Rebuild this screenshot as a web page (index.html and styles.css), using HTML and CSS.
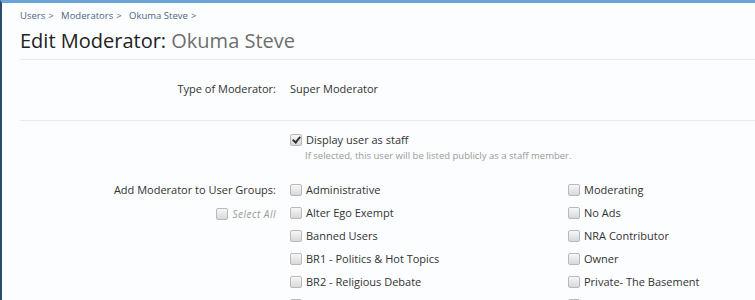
FILE: index.html
```html
<!DOCTYPE html>
<html lang="en">
  <head>
    <meta charset="UTF-8" />
    <meta name="viewport" content="width=device-width, initial-scale=1.0" />
    <title>Edit Moderator: Okuma Steve</title>
    <link rel="stylesheet" href="styles.css">
  </head>
  <body>
    <div class="container">
      <div class="breadcrumb">
        <a href="#">Users</a><span class="arrow">&gt;</span>
        <a href="#">Moderators</a><span class="arrow">&gt;</span>
        <a href="#">Okuma Steve</a><span class="arrow">&gt;</span>
      </div>
      <h1>Edit Moderator: <em>Okuma Steve</em></h1>

      <form class="form">
        <div class="row row-type">
          <div class="label">Type of Moderator:</div>
          <div class="value">Super Moderator</div>
        </div>

        <div class="row row-staff">
          <div class="label"></div>
          <div class="value">
            <label class="check">
              <span class="box checked"></span>
              Display user as staff
            </label>
            <p class="hint">If selected, this user will be listed publicly as a staff member.</p>
          </div>
        </div>

        <div class="row row-groups">
          <div class="label">
            Add Moderator to User Groups:
            <label class="select-all"><span class="box"></span>Select All</label>
          </div>
          <div class="value groups">
            <label class="check"><span class="box"></span>Administrative</label>
            <label class="check"><span class="box"></span>Moderating</label>
            <label class="check"><span class="box"></span>Alter Ego Exempt</label>
            <label class="check"><span class="box"></span>No Ads</label>
            <label class="check"><span class="box"></span>Banned Users</label>
            <label class="check"><span class="box"></span>NRA Contributor</label>
            <label class="check"><span class="box"></span>BR1 - Politics &amp; Hot Topics</label>
            <label class="check"><span class="box"></span>Owner</label>
            <label class="check"><span class="box"></span>BR2 - Religious Debate</label>
            <label class="check"><span class="box"></span>Private- The Basement</label>
            <label class="check"><span class="box"></span>Registered</label>
            <label class="check"><span class="box"></span>Staff</label>
          </div>
        </div>
      </form>
    </div>
  </body>
</html>
```

FILE: styles.css
```css
html,
body {
  height: 100%;
}
body {
  font-family: "Open Sans", Arial, sans-serif;
  font-size: 11px;
  color: #333;
  background-color: #fcfdfe;
  margin: 0;
  border-top: 3px solid #6ca3d6;
  border-left: 2px solid #2d4b6a;
  overflow: hidden;
  box-sizing: border-box;
}
.container {
  padding: 6px 0 0 18px;
}
.breadcrumb {
  font-size: 9.5px;
  line-height: 14px;
}
.breadcrumb a {
  color: #4d6584;
  text-decoration: none;
}
.breadcrumb .arrow {
  color: #4d6584;
  margin: 0 5px 0 3px;
}
h1 {
  font-size: 20px;
  font-weight: normal;
  color: #222;
  margin: 4px 0 0 0;
  padding-bottom: 4px;
  line-height: 28px;
  border-bottom: 1px solid #e2ebf1;
}
h1 em {
  font-style: normal;
  color: #6e6e6e;
}
.form {
  margin: 0;
}
.row {
  display: grid;
  grid-template-columns: 256px 1fr;
  column-gap: 14px;
}
.label {
  text-align: right;
}
.row-type {
  padding: 22px 0 24px;
  border-bottom: 1px solid #e2ebf1;
  line-height: 14px;
}
.row-staff {
  padding-top: 12px;
}
.check {
  display: flex;
  align-items: center;
  font-size: 11px;
  line-height: 14px;
}
.box {
  display: inline-block;
  width: 10px;
  height: 10px;
  border: 1px solid #b9b9b9;
  border-radius: 2px;
  background: linear-gradient(#f7f7f7, #d8d8d8);
  margin-right: 4px;
  position: relative;
  flex: none;
}
.box.checked::after {
  content: "";
  position: absolute;
  left: 3px;
  top: 0;
  width: 3px;
  height: 6px;
  border: solid #333;
  border-width: 0 2px 2px 0;
  transform: rotate(40deg);
}
.hint {
  margin: 3px 0 0 15px;
  font-size: 9.5px;
  color: #9a9a9a;
  line-height: 12px;
}
.row-groups {
  padding-top: 21px;
}
.row-groups .label {
  line-height: 14px;
}
.select-all {
  display: flex;
  justify-content: flex-end;
  align-items: center;
  margin-top: 10px;
  font-style: italic;
  color: #999;
  font-size: 10px;
  letter-spacing: 0.5px;
}
.groups {
  display: grid;
  grid-template-columns: 278px 1fr;
  row-gap: 9px;
}
```
